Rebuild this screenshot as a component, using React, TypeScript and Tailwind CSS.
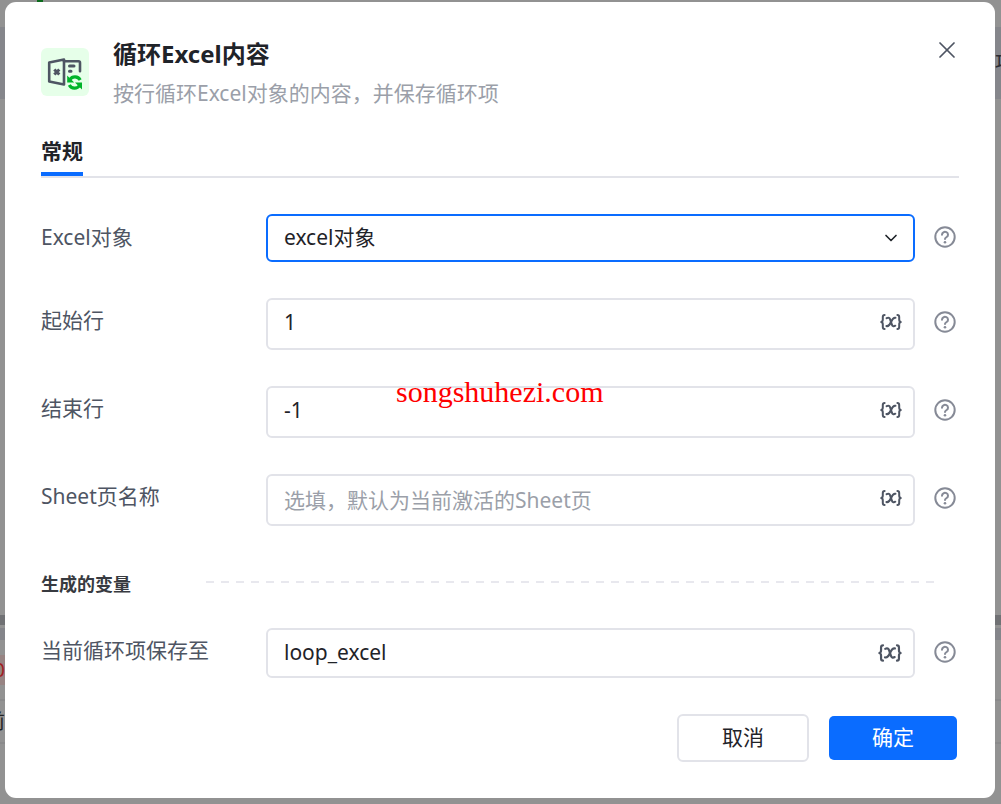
import { useState, type ReactNode } from "react";
import { ChevronDown, X } from "lucide-react";

const FIELD =
  "w-full rounded-md border-2 border-[#e2e3e9] bg-white pl-4 pr-12 text-[21px] leading-7 text-[#1f2329] outline-none placeholder:text-[#9b9fa9] placeholder:opacity-100";

function HelpIcon() {
  return (
    <svg viewBox="0 0 22 22" className="size-[22px]" fill="none" stroke="#868a96" aria-hidden>
      <circle cx="11" cy="11" r="9.7" strokeWidth="2" />
      <path
        d="M8 8.700a3 2.800 0 1 1 4.700 2.300c-1 .7-1.700 1-1.700 2.100"
        strokeWidth="2"
        strokeLinecap="round"
      />
      <circle cx="11" cy="16.200" r="1.300" fill="#868a96" stroke="none" />
    </svg>
  );
}

function VariableIcon({ className }: { className: string }) {
  return (
    <svg
      viewBox="0 0 22 18"
      className={className}
      fill="none"
      stroke="#4e5563"
      strokeWidth="2"
      strokeLinecap="round"
      strokeLinejoin="round"
      aria-hidden
    >
      <path d="M4.600 2C3.200 2 2.800 2.600 2.800 4v2.500C2.800 8 2.300 8.800 1.200 9c1.100.2 1.600 1 1.600 2.500V14c0 1.400.4 2 1.800 2" />
      <path d="M17.400 2c1.400 0 1.800.6 1.800 2v2.500c0 1.500.5 2.300 1.600 2.500-1.100.2-1.600 1-1.600 2.500V14c0 1.400-.4 2-1.800 2" />
      <path d="M6.600 5.200c2-1 3.100-.2 3.600 1.400l1.600 4.800c.5 1.600 1.700 2.400 3.500 1.300" />
      <path d="M15.500 4.800c-1.900-.4-3 .7-4.500 4.200s-2.700 4.600-4.600 4" />
    </svg>
  );
}

function LoopExcelIcon() {
  return (
    <div className="flex size-12 shrink-0 items-center justify-center rounded-md bg-[#e6ffe9]">
      <svg viewBox="0 0 36 36" className="size-9" fill="none" aria-hidden>
        <g stroke="#4e5563" strokeWidth="2.600" strokeLinejoin="round" strokeLinecap="round">
          <path d="M2.200 8.500 17 5.500v25L2.200 27.500Z" />
          <path d="M17 7.200h14.500a1.500 1.500 0 0 1 1.500 1.500v8.500" />
          <path d="M22.500 12h4.500M22.500 17.200h1.500" strokeWidth="3" />
          <path d="m7.300 15.500 5 5M12.300 15.500l-5 5" strokeWidth="3" strokeLinecap="butt" />
        </g>
        <g stroke="#00b42a" strokeWidth="3.200">
          <path d="M23 25.500c2.300-3.700 8-3.700 10.200.5" />
          <path d="M32.500 31.500c-2.300 3.700-8 3.700-10.200-.5" />
        </g>
        <path d="M20.200 21.500v7h7ZM35 35.500v-7h-7Z" fill="#00b42a" />
      </svg>
    </div>
  );
}

type RowProps = {
  id: string;
  label: string;
  className?: string;
  labelClass?: string;
  helpClass?: string;
  children: ReactNode;
};

function FieldRow({
  id,
  label,
  className = "mt-9",
  labelClass = "pb-2",
  helpClass = "pb-1",
  children,
}: RowProps) {
  return (
    <div className={`flex items-center pr-[3px] ${className}`}>
      <label
        htmlFor={id}
        className={`w-[225px] shrink-0 text-[21px] leading-7 text-[#4e5563] ${labelClass}`}
      >
        {label}
      </label>
      <div className="relative min-w-0 flex-1">{children}</div>
      <button
        type="button"
        aria-label={`${label} 帮助`}
        className={`ml-[19px] shrink-0 ${helpClass}`}
      >
        <HelpIcon />
      </button>
    </div>
  );
}

type VariableInputProps = {
  id: string;
  initial?: string;
  placeholder?: string;
  className?: string;
  triggerClass?: string;
  iconClass?: string;
};

function VariableInput({
  id,
  initial = "",
  placeholder,
  className = "h-[52px]",
  triggerClass = "pb-1",
  iconClass = "h-[18px] w-[22px]",
}: VariableInputProps) {
  const [value, setValue] = useState(initial);
  return (
    <>
      <input
        id={id}
        type="text"
        value={value}
        placeholder={placeholder}
        onChange={(e) => setValue(e.target.value)}
        className={`${FIELD} block ${className}`}
      />
      <button
        type="button"
        aria-label="选择变量"
        className={`absolute inset-y-0 right-[13px] flex items-center ${triggerClass}`}
      >
        <VariableIcon className={iconClass} />
      </button>
    </>
  );
}

/** Dimmed page that shows round the edges of the dialog. */
function DimmedPage() {
  return (
    <div
      aria-hidden
      className="absolute inset-0 flex flex-col overflow-hidden bg-[#929292] text-[20px] leading-7"
    >
      <div className="h-[27px]">
        <div className="ml-[37px] h-[2px] w-[6px] bg-[#0b6b1c]" />
      </div>
      <div className="flex h-[72px] items-center justify-end bg-[#85868b] text-[#2b2d33]">
        <span className="-mr-[14px]">项</span>
      </div>
      <div className="h-[516px]" />
      <div className="h-[10px] bg-[#707174]" />
      <div className="h-[3px]" />
      <div className="h-[12px] bg-[#84858a]" />
      <div className="h-[15px]" />
      <div className="flex h-[30px] w-[5px] items-center justify-end bg-[#978483] text-[#a01f24]">
        0
      </div>
      <div className="h-[16px] border-b-2 border-[#8a8a8b]" />
      <div className="flex h-[43px] items-center border-b-2 border-[#8a8a8b] text-[#222]">
        <span className="-ml-[15px]">前</span>
      </div>
    </div>
  );
}

export default function App() {
  const [target, setTarget] = useState("excel对象");

  return (
    <div className="relative min-h-screen pt-[2px] pr-[6px] pb-[6px] pl-[5px] font-['Noto_Sans','Noto_Sans_CJK_SC',sans-serif]">
      <DimmedPage />
      <form
        role="dialog"
        aria-labelledby="dialog-title"
        onSubmit={(e) => e.preventDefault()}
        className="relative rounded-[11px] bg-white px-9 pt-[34px] pb-9"
      >
        <header className="flex items-start">
          <div className="pt-3">
            <LoopExcelIcon />
          </div>
          <div className="ml-6 min-w-0 flex-1">
            <h1 id="dialog-title" className="text-[24px] leading-9 font-bold text-[#1f2329]">
              循环Excel内容
            </h1>
            <p className="mt-[3px] text-[21px] leading-9 text-[#9b9fa9]">
              按行循环Excel对象的内容，并保存循环项
            </p>
          </div>
          <button type="button" aria-label="关闭" className="-mr-[2px] text-[#4e5563]">
            <X className="size-7" strokeWidth={1.5} />
          </button>
        </header>

        <div role="tablist" className="mt-[22px] flex border-b-2 border-[#e2e3e9]">
          <button
            type="button"
            role="tab"
            aria-selected
            className="border-b-4 border-[#0a6cff] pb-[3px] text-[21px] leading-9 font-bold text-[#1f2329]"
          >
            常规
          </button>
        </div>

        <FieldRow id="excel" label="Excel对象" labelClass="pb-[3px]" helpClass="pb-[2px]">
          <select
            id="excel"
            value={target}
            onChange={(e) => setTarget(e.target.value)}
            className="block h-12 w-full appearance-none rounded-md border-2 border-[#0a6cff] bg-white pr-12 pb-[2px] pl-4 text-[21px] leading-7 text-[#1f2329] outline-none"
          >
            <option>excel对象</option>
          </select>
          <span className="pointer-events-none absolute inset-y-0 right-[14px] flex items-center text-[#1f2329]">
            <ChevronDown className="size-5" strokeWidth={2} />
          </span>
        </FieldRow>
        <FieldRow id="start" label="起始行">
          <VariableInput id="start" initial="1" className="h-[52px] pb-1" />
        </FieldRow>
        <FieldRow id="end" label="结束行">
          <VariableInput id="end" initial="-1" className="h-[52px] pb-1" />
        </FieldRow>
        <FieldRow id="sheet" label="Sheet页名称">
          <VariableInput id="sheet" placeholder="选填，默认为当前激活的Sheet页" />
        </FieldRow>

        <div className="mt-11 flex items-center pr-[25px]">
          <h2 className="w-[165px] shrink-0 text-[18px] leading-7 font-bold text-[#373a40]">
            生成的变量
          </h2>
          <div className="mb-1 h-[2px] flex-1 bg-[repeating-linear-gradient(90deg,#e8e8ee_0_8px,transparent_8px_15px)]" />
        </div>

        <FieldRow
          id="save"
          label="当前循环项保存至"
          className="mt-[30px]"
          labelClass="pb-[6px]"
          helpClass="pb-[2px]"
        >
          <VariableInput
            id="save"
            initial="loop_excel"
            className="h-[50px] pb-[2px]"
            triggerClass="pb-0"
            iconClass="h-5 w-6"
          />
        </FieldRow>

        <footer className="mt-9 flex items-center justify-end gap-5 pr-[2px]">
          <button
            type="button"
            className="h-12 w-[132px] rounded-md border-2 border-[#e2e3e9] bg-white pb-[2px] text-[21px] leading-7 text-[#1f2329]"
          >
            取消
          </button>
          <button
            type="submit"
            className="h-11 w-32 rounded-[5px] bg-[#0a6cff] pb-[2px] text-[21px] leading-7 text-white"
          >
            确定
          </button>
        </footer>

        <span className="pointer-events-none absolute top-[374px] left-[391px] font-['Liberation_Serif',serif] text-[30px] leading-8 text-[#ff0000]">
          songshuhezi.com
        </span>
      </form>
    </div>
  );
}
